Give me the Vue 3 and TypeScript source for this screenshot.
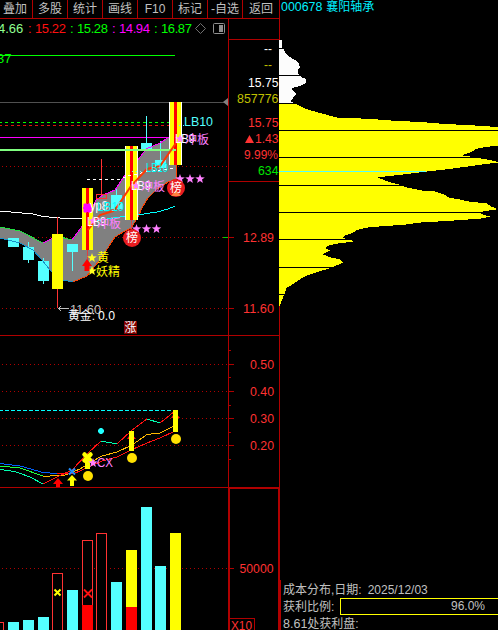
<script setup lang="ts">
interface Bar { x: number; top: number; kind: 'cyan' | 'yellow' | 'hollow'; red?: number }
interface Label { t: string; x: number; y: number; w: number; c: string; s?: number }

const menu = [
  { t: '叠加', w: 32 }, { t: '多股', w: 35 }, { t: '统计', w: 35 }, { t: '画线', w: 35 },
  { t: 'F10', w: 35 }, { t: '标记', w: 35 }, { t: '-自选', w: 35 }, { t: '返回', w: 37 },
]

const readings = [
  { t: '15.22', c: 'red' }, { t: '15.28', c: 'green' },
  { t: '14.94', c: 'magenta' }, { t: '16.87', c: 'green' },
]

const stats: Label[] = [
  { t: '--', x: 264, y: 53, w: 8, c: '#ffffff' },
  { t: '--', x: 264, y: 69, w: 8, c: '#c0c000' },
  { t: '15.75', x: 248, y: 87, w: 30.5, c: '#ffffff' },
  { t: '857776', x: 237, y: 103, w: 41.5, c: '#c0c000' },
  { t: '15.75', x: 248, y: 127, w: 30.5, c: '#ff3232' },
  { t: '1.43', x: 255, y: 143, w: 23.5, c: '#ff3232' },
  { t: '9.99%', x: 244, y: 159, w: 34, c: '#ff3232' },
  { t: '634', x: 258, y: 175, w: 20.5, c: '#00e600' },
  { t: '12.89', x: 243, y: 242, w: 31, c: '#ff3232' },
  { t: '11.60', x: 243, y: 313, w: 31, c: '#ff3232' },
]

const mainLabels: Label[] = [
  { t: '37', x: -3, y: 63, w: 14.5, c: '#00ff00' },
  { t: 'LB10', x: 184, y: 126, w: 29, c: '#54ffff' },
  { t: 'LB9', x: 175, y: 143, w: 20, c: '#ffffff' },
  { t: '冲板', x: 185, y: 144, w: 24, c: '#ff80ff', s: 12 },
  { t: 'LB10', x: 146, y: 172, w: 22, c: '#00ffff' },
  { t: 'LB9', x: 131, y: 190, w: 20, c: '#ffffff' },
  { t: '冲板', x: 141, y: 191, w: 24, c: '#ff80ff', s: 12 },
  { t: 'yp8', x: 90, y: 210, w: 18, c: '#ffffff' },
  { t: 'LB10', x: 97, y: 211, w: 27, c: '#00ffff' },
  { t: 'LB9', x: 87, y: 226, w: 19, c: '#ffffff' },
  { t: '冲板', x: 97, y: 228, w: 24, c: '#ff80ff', s: 12 },
  { t: '黄', x: 97, y: 262, w: 12, c: '#ffff00', s: 12 },
  { t: '妖精', x: 96, y: 276, w: 24, c: '#ffff00', s: 12 },
  { t: '11.60', x: 70, y: 314, w: 31, c: '#c0c0c0' },
  { t: '黄金:', x: 68, y: 320, w: 27, c: '#ffffff', s: 12 },
  { t: '0.0', x: 98, y: 320, w: 17, c: '#ffffff' },
]

const indexScale = [
  { t: '0.50', y: 364 }, { t: '0.40', y: 391 }, { t: '0.30', y: 418 }, { t: '0.20', y: 445 },
]

const volumes: Bar[] = [
  { x: -7, top: 622, kind: 'hollow' },
  { x: 8, top: 622, kind: 'cyan' },
  { x: 23, top: 620, kind: 'cyan' },
  { x: 38, top: 617, kind: 'cyan' },
  { x: 52, top: 573, kind: 'hollow' },
  { x: 67, top: 590, kind: 'cyan' },
  { x: 82, top: 540, kind: 'hollow', red: 605 },
  { x: 96, top: 533, kind: 'hollow' },
  { x: 111, top: 582, kind: 'cyan' },
  { x: 126, top: 550, kind: 'yellow', red: 607 },
  { x: 141, top: 507, kind: 'cyan' },
  { x: 155, top: 566, kind: 'cyan' },
  { x: 170, top: 533, kind: 'yellow' },
]

const cyanCandles = [
  { x: 8, top: 238, bottom: 247, high: 238, low: 247 },
  { x: 23, top: 247, bottom: 260, high: 242, low: 263 },
  { x: 38, top: 261, bottom: 281, high: 258, low: 284 },
  { x: 67, top: 244, bottom: 252, high: 244, low: 271 },
  { x: 111, top: 195, bottom: 209, high: 189, low: 209 },
  { x: 141, top: 143, bottom: 150, high: 116, low: 150 },
  { x: 155, top: 160, bottom: 168, high: 141, low: 168 },
]

const star = (cx: number, cy: number, r = 5): string =>
  Array.from({ length: 10 }, (_, i) => {
    const a = -Math.PI / 2 + (i * Math.PI) / 5
    const q = i % 2 ? r * 0.42 : r
    return `${(cx + q * Math.cos(a)).toFixed(1)},${(cy + q * Math.sin(a)).toFixed(1)}`
  }).join(' ')

const pinkStars: [number, number][] = [
  [180, 139], [180, 179], [190, 179], [200, 179], [136, 186], [136.5, 229], [146.5, 229], [156.5, 229], [93, 221],
]

const profileLines = [48, 75, 103, 130, 157, 185, 212, 239, 267, 294]

const whiteProfile = '279,40 281.5,40 282,47 284,50 286,54 290,57 295,60 299,64 300,67 298,70 298,74 301,77 306,79 306,83 302,85 296,87 292,88 291,89 294,92 296,94 293,98 290,101 294,103 279,103'

const yellowProfile = '279,104 295.7,104 306,109 320,113 337.7,117.7 366.7,118.7 394,120.7 425,122.3 441,123.7 471.7,125.3 498,127 498,146 486.7,146.7 475.7,149 471,152.3 462,155.3 471,156.7 488,159.7 498,162 498,162.8 485,164 466.7,166.7 443.3,169.7 425,171.7 401.7,174.7 377.3,177.3 390,182.3 400,184.7 406,187.3 423.3,190.7 435,191.5 445,195 449,197.7 460.7,199.7 470,201.7 486.7,203.3 491.7,206.7 498,209.3 483,211.3 480.7,214 490.7,216.7 480,218.7 451.7,220.7 418,222.7 405,224.7 376.7,226.7 365.7,227.7 356.7,230 353,232.7 344,235.7 343,238 355,241.3 336.7,243.7 326.7,246 326,249 330.7,250.3 322.3,254.3 331.7,257.7 340,259.3 342.7,262.7 331.7,267.7 313.3,273.3 303.3,277 295,282.7 286.7,288 283.3,296.7 280,305 279,306'
</script>

<template>
  <div class="terminal">
    <section class="charts">
      <nav class="menu">
        <span v-for="m in menu" :key="m.t" class="item" :style="{ width: m.w + 'px' }">{{ m.t }}</span>
      </nav>
      <div class="legend">
        <div class="readings">
          <span class="pale">4.66</span>
          <span v-for="(r, i) in readings" :key="i" class="reading" :class="r.c"><i class="colon">:</i>{{ r.t }}</span>
          <svg class="tools" width="32" height="13" viewBox="194 22 32 13">
            <path d="M200.5 23.5 L205.5 28.5 L200.5 33.5 L195.5 28.5Z" fill="none" stroke="#707070" />
            <rect x="213.5" y="23.5" width="11" height="10" rx="1" fill="none" stroke="#909090" />
            <rect x="219" y="25" width="4" height="7" fill="#909090" />
          </svg>
        </div>
        <div class="corner"></div>
      </div>

      <svg class="plot" width="279" height="296" viewBox="0 40 279 296">
        <g class="grid">
          <path d="M2 166.5H228M2 237.5H228M2 308.5H228" />
        </g>
        <g class="crisp">
          <rect x="0" y="55" width="175" height="1" fill="#00ff00" />
          <rect x="0" y="102" width="225" height="1" fill="#505050" />
          <path d="M0 122.5H176" stroke="#00ff00" stroke-dasharray="3 3" stroke-dashoffset="1" />
          <path d="M0 125.5H176" stroke="#e01010" stroke-dasharray="3 3" stroke-dashoffset="1" />
          <rect x="0" y="137" width="176" height="1" fill="#ff00ff" />
        </g>
        <path d="M223 102L228 98V106Z" fill="#808080" />

        <path fill="#808080" d="M0 227L20 231L43 243L57 236L72 240L87 220L96 200L103 195L115 190L125 175L138 160L146 149L160 143L176 132V179L168 182L157 189L148 198L142 208L138 217L131 228L125 231L115 237L100 260L90 272L87 276L73 282L62 280L50 270L42 260L33 250L20 243L0 238Z" />
        <g class="crisp line">
          <rect v-for="c in cyanCandles" :key="'b' + c.x" :x="c.x" :y="c.top" width="11" :height="c.bottom - c.top" fill="#54ffff" />
          <rect v-for="c in cyanCandles" :key="'w' + c.x" :x="c.x + 5" :y="c.high" width="1" :height="c.low - c.high" fill="#54ffff" />
          <path stroke="#20e040" d="M0 227L20 231L43 243M57 236L72 240" />
          <path stroke="#ff00ff" d="M43 243L57 236M72 240L87 220L96 200L103 195L115 190L125 175L138 160L146 149L160 143L176 132" />
          <path stroke="#1890c8" d="M0 238L20 243L33 250L42 260L50 270L62 280L73 282" />
          <path stroke="#ff4000" d="M73 282L87 276L90 272L100 260L115 237L125 231L131 228L138 217L142 208L148 198L157 189L168 182L176 179V165" />
          <path stroke="#ffffff" d="M0 211L33 214L43 216.5L60 218L72 219L86 218" />
          <path stroke="#00ffff" d="M90 222L107 219L120 217L137 215L157 212L168 209L175 206" />
        </g>

        <g class="crisp">
          <rect x="57" y="217" width="1" height="91" fill="#ff3232" />
          <rect x="52" y="234" width="11" height="55" fill="#ffff00" />
          <rect x="82" y="188" width="11" height="62" fill="#ffff00" />
          <rect x="86" y="188" width="3" height="62" fill="#ff0000" />
          <rect x="87" y="250" width="1" height="10" fill="#e04040" />
          <rect x="101" y="159" width="1" height="35" fill="#ff3232" />
          <rect x="96.5" y="194.5" width="10" height="4" fill="none" stroke="#ff3232" />
          <rect x="125" y="146" width="13" height="74" fill="#ffffff" />
          <rect x="126" y="146" width="11" height="74" fill="#ffff00" />
          <rect x="130" y="146" width="3" height="74" fill="#ff0000" />
          <rect x="131" y="220" width="1" height="9" fill="#e04040" />
          <rect x="169" y="102" width="13" height="63" fill="#ffffff" />
          <rect x="170" y="102" width="11" height="63" fill="#ffff00" />
          <rect x="174" y="102" width="3" height="63" fill="#ff0000" />
          <rect x="0" y="149" width="176" height="2" fill="#80ff80" />
          <path d="M87 179.5H119L128 176L146 172L174 168" fill="none" stroke="#ffffff" stroke-dasharray="3 3" />
          <path d="M184 125.5H178M132 171.5H145" fill="none" stroke="#54ffff" stroke-dasharray="1 3" />
        </g>
        <path d="M88 230L100 215L113 211L117 207L131 186L147 169L160 166L176 143" fill="none" stroke="#ff3800" stroke-width="2" />
        <path d="M84 204H87L87.5 205L88 204H91V207L92 208L91 209V212H88L87.5 211L87 212H84V209L83 208L84 207Z" fill="#ff00ff" stroke="#ff00ff" />
        <polygon v-for="(p, i) in pinkStars" :key="i" :points="star(p[0], p[1])" fill="#ff80ff" />
        <polygon :points="star(92, 258)" fill="#ffff20" />
        <polygon :points="star(92, 271)" fill="#ffff20" />
        <path d="M87 259L92 266H89.5V271H84.5V266H82Z" fill="#ff0000" />
        <path d="M58 308.5H69M61 306L58.5 308.5L61 311" fill="none" stroke="#c0c0c0" />
        <text v-for="(l, i) in mainLabels" :key="'l' + i" :x="l.x" :y="l.y" :fill="l.c" :textLength="l.w" :font-size="l.s ?? 13" lengthAdjust="spacingAndGlyphs">{{ l.t }}</text>
        <circle cx="176" cy="188" r="9" fill="#e81c20" />
        <path d="M171 196L176 190L181 196Z" fill="#ff8040" />
        <text x="170" y="192" fill="#fff" font-size="12">榜</text>
        <circle cx="132" cy="238" r="9" fill="#e81c20" />
        <text x="126" y="242" fill="#fff" font-size="12">榜</text>
        <rect x="124" y="321" width="13" height="13" fill="#800000" />
        <text x="124.5" y="332" fill="#fff" font-size="12">涨</text>

        <g class="crisp frame">
          <rect x="228" y="40" width="1" height="296" />
          <rect x="0" y="335" width="279" height="1" />
          <rect x="229" y="181" width="50" height="1" />
          <rect x="229" y="237" width="5" height="1" />
          <rect x="229" y="308" width="5" height="1" />
        </g>
        <rect class="crisp" x="223" y="237" width="5" height="1" fill="#00d000" />
        <path d="M245 143L249.5 135L254 143Z" fill="#ff3232" />
        <text v-for="(l, i) in stats" :key="'s' + i" :x="l.x" :y="l.y" :fill="l.c" :textLength="l.w" font-size="13" lengthAdjust="spacingAndGlyphs">{{ l.t }}</text>
      </svg>

      <svg class="plot" width="279" height="151" viewBox="0 336 279 151">
        <g class="grid">
          <path v-for="g in indexScale" :key="g.t" :d="`M2 ${g.y + 0.5}H228`" />
        </g>
        <g class="crisp frame">
          <rect x="228" y="336" width="1" height="151" />
          <rect v-for="g in indexScale" :key="g.t" x="229" :y="g.y" width="5" height="1" />
          <rect v-for="y in [350, 377, 405, 432, 459]" :key="y" x="229" :y="y" width="2" height="1" />
        </g>
        <text v-for="g in indexScale" :key="g.t" x="250" :y="g.y + 5" fill="#ff3232" font-size="13" textLength="24" lengthAdjust="spacingAndGlyphs">{{ g.t }}</text>
        <g class="crisp line">
          <path d="M0 410.5H178" stroke="#00ffff" stroke-dasharray="4 2" stroke-dashoffset="1" />
          <path stroke="#0060ff" d="M0 463.5L20 466L43 472.5L57 473.5H72" />
          <path stroke="#20ff40" d="M0 466L20 468L43 476" />
          <path stroke="#ffb800" d="M43 476.5L65 475L80 469L93 461L102 456L117 452L132 445L147 434.5L160 433L174 426" />
          <path stroke="#00ffb0" d="M0 469.5L15 471.5L30 477L43 484M101 441L117 444M147 419L160 423" />
          <path stroke="#ff1010" d="M43 484L57 477L72 470L87 454L101 441M117 444L131 431L147 419M160 423L175 411" />
          <path stroke="#ff1010" d="M57 473.5H74L82 470L102 461L117 457L131 450L147 443L160 438L175 431" />
        </g>
        <path d="M127 439L131 433L136 439ZM171 418L175 412L180 418Z" fill="#ff1010" />
        <g class="crisp" fill="#ffff00">
          <rect x="85" y="458" width="5" height="11" />
          <rect x="129" y="431" width="5" height="20" />
          <rect x="173" y="410" width="5" height="22" />
        </g>
        <path d="M84.5 454.5L90.5 460.5M90.5 454.5L84.5 460.5" stroke="#ffff00" stroke-width="4.5" stroke-linecap="round" />
        <g fill="#ffe000">
          <circle cx="88" cy="476" r="5" /><circle cx="132" cy="458" r="5" /><circle cx="176" cy="439" r="5" />
        </g>
        <path d="M100 428H102L104 430V432L102 434H100L98 432V430Z" fill="#20ffff" />
        <path d="M69 468.5L75 474.5M75 468.5L69 474.5" stroke="#2090ff" stroke-width="2" />
        <path d="M58 478L63 484H60V487H56V484H53Z" fill="#ff0000" />
        <path d="M72 475L77 480.5H74V486H70V480.5H67Z" fill="#ffff00" />
        <polygon :points="star(93, 463)" fill="#ff80ff" />
        <text x="97" y="467" fill="#ff80ff" font-size="13" textLength="16" lengthAdjust="spacingAndGlyphs">CX</text>
      </svg>

      <svg class="plot" width="279" height="143" viewBox="0 487 279 143">
        <g class="grid"><path d="M2 568.5H228" /></g>
        <g class="crisp">
          <template v-for="v in volumes" :key="v.x">
            <rect v-if="v.kind === 'hollow'" :x="v.x + 0.5" :y="v.top + 0.5" width="10" height="140" fill="#000" stroke="#ff3232" />
            <rect v-else :x="v.x" :y="v.top" width="11" :height="630 - v.top" :fill="v.kind === 'cyan' ? '#54ffff' : '#ffff00'" />
            <rect v-if="v.red" :x="v.x" :y="v.red" width="11" :height="630 - v.red" fill="#ff0000" />
          </template>
        </g>
        <path d="M54.5 589.5L60.5 595.5M60.5 589.5L54.5 595.5" stroke="#ffff00" stroke-width="2" />
        <path d="M84 589.5L92 597.5M92 589.5L84 597.5" stroke="#ff1010" stroke-width="1.8" />
        <g class="crisp frame">
          <rect x="0" y="487" width="279" height="1" />
          <rect x="228" y="487" width="51" height="2" />
          <rect x="228" y="487" width="2" height="143" />
          <rect x="278" y="487" width="1" height="143" />
          <rect x="230" y="568" width="4" height="1" />
          <path d="M229 618.5H254.5V630" fill="none" stroke="#b00000" />
        </g>
        <text x="239.5" y="573" fill="#ff3232" font-size="13" textLength="34" lengthAdjust="spacingAndGlyphs">50000</text>
        <text x="231" y="630" fill="#ff3232" font-size="13" textLength="21" lengthAdjust="spacingAndGlyphs">X10</text>
      </svg>
    </section>

    <aside class="cost">
      <header class="title"><span class="code">000678</span><span>襄阳轴承</span></header>
      <svg class="plot crisp" width="219" height="560" viewBox="279 20 219 560">
        <rect x="279" y="20" width="1" height="560" fill="#b00000" />
        <polygon :points="whiteProfile" fill="#fcfcfc" />
        <polygon :points="yellowProfile" fill="#ffff00" />
        <rect x="279" y="171" width="147" height="1" fill="#54ffff" />
        <rect v-for="y in profileLines" :key="y" x="279" :y="y" width="219" height="1" fill="#000" />
      </svg>
      <footer class="summary">
        <div class="row"><span>成本分布,日期:</span><span class="date">2025/12/03</span></div>
        <div class="row"><span>获利比例:</span><span class="gauge">96.0%</span></div>
        <div class="row"><span><span class="num">8.61</span>处获利盘:</span></div>
      </footer>
    </aside>
  </div>
</template>

<style>
body {
  background: #000;
  overflow: hidden;
}
</style>

<style scoped>
.terminal {
  display: grid;
  grid-template-columns: 279px 219px;
  width: 498px;
  height: 630px;
  overflow: hidden;
  background: #000;
  color: #c0c0c0;
  font: 12px/16px "Liberation Sans", "Noto Sans CJK SC", sans-serif;
}
.charts,
.cost {
  display: flex;
  flex-direction: column;
  min-width: 0;
}
.plot {
  display: block;
  flex: none;
}
.crisp {
  shape-rendering: crispEdges;
}
.line path {
  fill: none;
}
.grid path {
  stroke: #b00000;
  stroke-dasharray: 1 3;
  shape-rendering: crispEdges;
}
.frame {
  fill: #b00000;
}
.menu {
  display: flex;
  height: 19px;
  box-sizing: border-box;
  border-bottom: 1px solid #b00000;
}
.item {
  flex: none;
  box-sizing: border-box;
  line-height: 18px;
  white-space: nowrap;
  text-align: center;
}
.item + .item {
  border-left: 1px solid #b00000;
}
.item:first-child {
  padding-right: 2px;
}
.legend {
  display: flex;
  height: 21px;
}
.readings {
  display: flex;
  align-items: center;
  width: 228px;
  height: 19px;
  font-size: 13px;
}
.pale {
  width: 28px;
  color: #90ff90;
  text-indent: -2px;
}
.reading {
  display: flex;
  width: 42px;
  letter-spacing: -0.4px;
}
.colon {
  width: 7px;
  font-style: normal;
}
.red {
  color: #ff1010;
}
.green {
  color: #00ff00;
}
.magenta {
  color: #ff00ff;
}
.tools {
  flex: none;
  margin-left: -2px;
}
.corner {
  flex: 1;
  border-left: 1px solid #b00000;
  border-bottom: 1px solid #b00000;
}
.title {
  display: flex;
  gap: 4px;
  height: 20px;
  box-sizing: border-box;
  padding-left: 1px;
  border-left: 1px solid #b00000;
  color: #00f0ff;
  line-height: 15px;
}
.code {
  font-size: 12.4px;
}
.summary {
  flex: 1;
  padding: 1px 0 0 2px;
  border-left: 2px solid #b00000;
}
.row {
  display: flex;
  align-items: center;
  height: 17px;
}
.date {
  margin-left: 6px;
}
.num {
  font-size: 12.5px;
}
.gauge {
  flex: 1;
  box-sizing: border-box;
  height: 17px;
  margin-left: 6px;
  padding-right: 13px;
  border: 1px solid #ffff00;
  border-right: 0;
  line-height: 15px;
  text-align: right;
}
</style>
